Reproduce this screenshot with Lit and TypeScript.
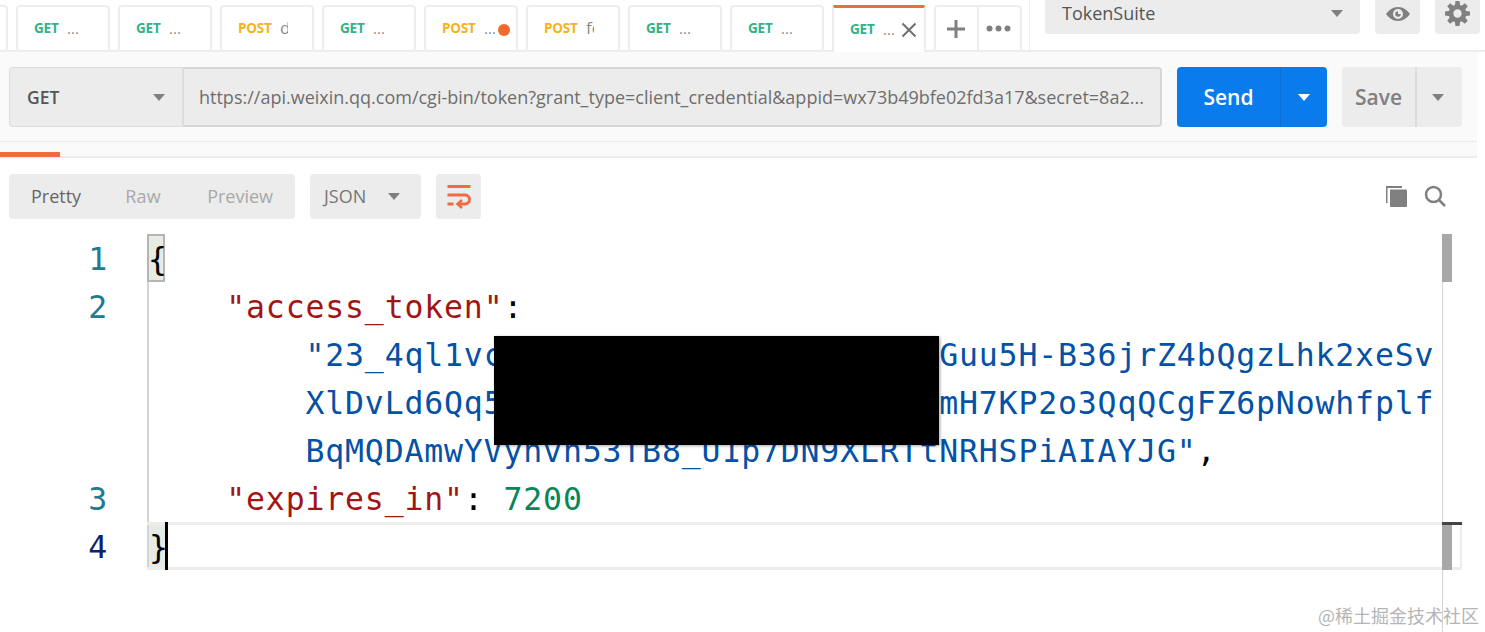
import { LitElement, html, css, svg } from "lit";
import { customElement } from "lit/decorators.js";

const caret = (cls = "") => html`<span class="caret ${cls}"></span>`;

const tabs = [
  { m: "GET", n: "..." },
  { m: "GET", n: "..." },
  { m: "POST", n: "d", clip: true },
  { m: "GET", n: "..." },
  { m: "POST", n: "...", dot: true },
  { m: "POST", n: "fo", clip: true },
  { m: "GET", n: "..." },
  { m: "GET", n: "..." },
  { m: "GET", n: "...", active: true },
];

@customElement("app-root")
export class AppRoot extends LitElement {
  static styles = css`
    :host { display: block; width: 1485px; height: 632px; overflow: hidden; position: relative; background: #fff; font-family: "Open Sans", "Noto Sans", sans-serif; color: #808080; }
    * { box-sizing: border-box; }
    .top { height: 52px; display: flex; align-items: flex-start; border-bottom: 2px solid #ededed; }
    .tabs { display: flex; gap: 8px; height: 50px; padding-top: 5px; }
    .frag { width: 8px; border: 2px solid #ededed; border-left: 0; border-bottom: 0; border-radius: 0 4px 0 0; }
    .tab { width: 94px; border: 2px solid #ededed; border-bottom: 0; border-radius: 4px 4px 0 0; display: flex; align-items: center; padding: 0 0 2px 16px; position: relative; font-size: 14px; }
    .tab.active { border-top: 3px solid #ef6c43; background: #fff; height: 47px; margin-bottom: -2px; border-radius: 3px 3px 0 0; }
    .m { font-weight: 700; font-size: 13.5px; letter-spacing: -0.2px; width: 33px; flex: none; }
    .m.GET { color: #2fb388; }
    .m.POST { color: #f5b21b; width: 42px; }
    .name { color: #8a8a8a; font-size: 15px; line-height: 20px; }
    .name.clip { width: 8px; overflow: hidden; white-space: nowrap; font-size: 17px; line-height: 22px; }
    .dot { position: absolute; right: 6px; top: 17px; width: 12px; height: 12px; border-radius: 50%; background: #f26b2a; }
    .close { position: absolute; right: 7px; top: 14px; }
    .adder { display: flex; width: 88px; height: 45px; border: 2px solid #ededed; border-bottom: 0; border-radius: 4px 4px 0 0; }
    .adder > div { flex: 1; display: flex; align-items: center; justify-content: center; padding-right: 2px; }
    .adder > div:first-child { border-right: 2px solid #ededed; }
    .sep { width: 1px; height: 50px; background: #efefef; margin: 0 15px 0 7px; }
    .suite { width: 315px; height: 34px; background: #ececec; border-radius: 0 0 4px 4px; display: flex; align-items: center; justify-content: space-between; padding: 0 17px 8px 17px; font-size: 18px; color: #555; }
    .iconbtn { width: 45px; height: 34px; background: #ececec; border-radius: 0 0 4px 4px; margin-left: 15px; display: flex; align-items: center; justify-content: center; padding-bottom: 7px; }
    .caret { display: inline-block; width: 0; height: 0; border-left: 6px solid transparent; border-right: 6px solid transparent; border-top: 7px solid #808080; }
    .caret.white { border-top-color: #fff; }

    .request { width: 1477px; height: 90px; background: #fafafa; padding: 15px 15px 0 9px; display: flex; border-bottom: 1px solid #ececec; }
    .bar { display: flex; height: 60px; flex: none; }
    .method { width: 175px; background: #ececec; border: 1px solid #dcdcdc; border-right: 2px solid #dcdcdc; border-radius: 4px 0 0 4px; display: flex; align-items: center; justify-content: space-between; padding: 0 17px; font-size: 17.5px; font-weight: 600; color: #555; }
    .url { width: 978px; background: #ececec; border: 2px solid #d6d6d6; border-left: 0; border-radius: 0 4px 4px 0; display: flex; align-items: center; padding: 0 0 0 15px; font-size: 18px; color: #6e6e6e; white-space: nowrap; }
    .send { margin-left: 15px; width: 150px; height: 60px; background: #097bed; border-radius: 4px; display: flex; color: #fff; font-size: 21px; font-weight: 600; }
    .send > div:first-child { width: 104px; display: flex; align-items: center; justify-content: center; border-right: 1px solid #0b6fd4; }
    .send > div:last-child { flex: 1; display: flex; align-items: center; justify-content: center; }
    .save { margin-left: 15px; width: 120px; height: 60px; background: #ececec; border-radius: 4px; display: flex; color: #808080; font-size: 21px; font-weight: 600; }
    .save > div:first-child { width: 75px; display: flex; align-items: center; justify-content: center; border-right: 2px solid #dcdcdc; }
    .save > div:last-child { flex: 1; display: flex; align-items: center; justify-content: center; padding-right: 3px; }

    .subtabs { width: 1477px; height: 16px; padding-top: 10px; background: #fafafa; border-bottom: 2px solid #ececec; }
    .subtabs div { width: 60px; height: 5px; background: #ef6c43; }

    .rtools { height: 76px; padding: 16px 0 0 9px; display: flex; align-items: flex-start; }
    .seg { height: 45px; background: #ececec; border-radius: 4px; display: flex; align-items: center; font-size: 18px; }
    .views { width: 286px; padding: 0 0 2px 22px; }
    .views span { color: #a8a8a8; }
    .views .on { color: #666; margin-right: 44px; }
    .views .raw { margin-right: 46px; letter-spacing: 0.3px; }
    .fmt { width: 111px; margin-left: 15px; padding: 0 21px 2px 14px; justify-content: space-between; color: #777; }
    .fmt .caret { margin-top: 2px; }
    .wrap { width: 45px; margin-left: 15px; justify-content: center; }
    .right { margin-left: auto; display: flex; align-items: center; gap: 17px; height: 45px; padding: 0 39px 1px 0; }

    .editor { position: relative; height: 398px; font-family: "DejaVu Sans Mono", "Liberation Mono", monospace; font-size: 31.5px; letter-spacing: 0.84px; }
    .row { display: flex; height: 48px; line-height: 50px; }
    .num { width: 147px; flex: none; text-align: right; padding-right: 39px; color: #237893; }
    .num.cur { color: #0b216f; }
    .code { flex: none; width: 1295px; border-left: 2px solid #d4d4d4; white-space: pre; color: #000; text-indent: -2px; }
    .k { color: #a31515; }
    .s { color: #0451a5; }
    .n { color: #098658; }
    .match { display: inline-block; width: 18px; height: 48px; background: #e6ece4; border: 2px solid #b5b5b5; line-height: 46px; text-indent: -1px; vertical-align: top; }
    .match.end { border: 0; border-left: 2px solid #d4d4d4; line-height: 50px; text-indent: 0; }
    .curline { position: absolute; left: 147px; top: 288px; width: 1315px; height: 48px; border-top: 3px solid #ededed; border-bottom: 3px solid #ededed; border-right: 2px solid #ededed; }
    .cursor { position: absolute; left: 165px; top: 288px; width: 3px; height: 48px; background: #000; }
    .rule { position: absolute; left: 1442px; top: 0; bottom: 0; width: 1px; background: #d4d4d4; }
    .thumb { position: absolute; left: 1442px; width: 10px; background: #a8a8a8; }
    .thumb.a { top: 0; height: 48px; }
    .thumb.b { top: 288px; height: 48px; }
    .mark { position: absolute; left: 1442px; top: 288px; width: 20px; height: 3px; background: #444; }
    .redact { position: absolute; left: 494px; top: 336px; width: 445px; height: 109px; background: #000; box-shadow: 1px 1px 3px rgba(0,0,0,.35); }
    .wm { position: absolute; right: 6px; top: 603px; font-size: 18px; line-height: 24px; color: #b5b5b5; font-family: "Noto Sans CJK SC", "Open Sans", sans-serif; white-space: nowrap; }
    svg { display: block; }
  `;

  private tab(t: any) {
    return html`<div class="tab ${t.active ? "active" : ""}">
      <span class="m ${t.m}">${t.m}</span>
      <span class="name ${t.clip ? "clip" : ""}">${t.n}</span>
      ${t.dot ? html`<span class="dot"></span>` : ""}
      ${t.active ? html`<svg class="close" width="16" height="16" viewBox="0 0 16 16"><path d="M1.5 1.5 14.5 14.5M14.5 1.5 1.5 14.5" stroke="#707070" stroke-width="2" fill="none"/></svg>` : ""}
    </div>`;
  }

  render() {
    const teeth = [0, 45, 90, 135, 180, 225, 270, 315].map(
      (a) => svg`<path d="M10 0h4l.6 5h-5.200z" transform="rotate(${a} 12 12)"/>`
    );
    return html`
      <div class="top">
        <div class="tabs">
          <div class="frag"></div>
          ${tabs.map((t) => this.tab(t))}
          <div class="adder">
            <div><svg width="18" height="18" viewBox="0 0 18 18"><path d="M9 0v18M0 9h18" stroke="#808080" stroke-width="3"/></svg></div>
            <div><svg width="25" height="7" viewBox="0 0 25 7" fill="#808080"><circle cx="3.500" cy="3.500" r="3"/><circle cx="12.500" cy="3.500" r="3"/><circle cx="21.500" cy="3.500" r="3"/></svg></div>
          </div>
        </div>
        <div class="sep"></div>
        <div class="suite"><span>TokenSuite</span>${caret()}</div>
        <div class="iconbtn"><svg width="24" height="14" viewBox="0 0 24 14"><path fill-rule="evenodd" fill="#808080" d="M12 0C6.500 0 2.500 3.500 0 7c2.500 3.500 6.500 7 12 7s9.500-3.500 12-7c-2.500-3.500-6.500-7-12-7zm0 2a5 5 0 1 1 0 10 5 5 0 0 1 0-10z"/><path fill="#808080" d="M12 4.200a2.800 2.800 0 1 0 2.800 2.800H12z"/></svg></div>
        <div class="iconbtn"><svg width="25" height="25" viewBox="0 0 24 24" fill="#808080">${teeth}<circle cx="12" cy="12" r="6.300" fill="none" stroke="#808080" stroke-width="4.600"/></svg></div>
      </div>

      <div class="request">
        <div class="bar">
          <div class="method"><span>GET</span>${caret()}</div>
          <div class="url">https://api.weixin.qq.com/cgi-bin/token?grant_type=client_credential&amp;appid=wx73b49bfe02fd3a17&amp;secret=8a2...</div>
        </div>
        <div class="send"><div>Send</div><div>${caret("white")}</div></div>
        <div class="save"><div>Save</div><div>${caret()}</div></div>
      </div>
      <div class="subtabs"><div></div></div>

      <div class="rtools">
        <div class="seg views"><span class="on">Pretty</span><span class="raw">Raw</span><span>Preview</span></div>
        <div class="seg fmt"><span>JSON</span>${caret()}</div>
        <div class="seg wrap"><svg width="26" height="24" viewBox="0 0 26 24" fill="none" stroke="#ef6c43" stroke-width="3"><path d="M1.500 1.500h23M1.500 10h17.500a4.500 4.500 0 0 1 0 9H12"/><path d="M1.500 19h6"/><path d="M16 15 11.500 19 16 23" stroke-width="2.500"/></svg></div>
        <div class="right">
          <svg width="22" height="22" viewBox="0 0 22 22" fill="#808080"><path d="M5 4.500h16a1 1 0 0 1 1 1V21a1 1 0 0 1-1 1H6a1 1 0 0 1-1-1z"/><path d="M1 1h16v2H2.500v15H1z"/></svg>
          <svg width="22" height="22" viewBox="0 0 22 22" fill="none" stroke="#808080" stroke-width="2.500"><circle cx="9.500" cy="9.500" r="7.500"/><path d="m15 15 6 6"/></svg>
        </div>
      </div>

      <div class="editor">
        <div class="row"><div class="num">1</div><div class="code"><span class="match">{</span></div></div>
        <div class="row"><div class="num">2</div><div class="code">    <span class="k">"access_token"</span>:</div></div>
        <div class="row"><div class="num"></div><div class="code"><span class="s">        "23_4ql1vc                      Guu5H-B36jrZ4bQgzLhk2xeSv</span></div></div>
        <div class="row"><div class="num"></div><div class="code"><span class="s">        XlDvLd6Qq5                      mH7KP2o3QqQCgFZ6pNowhfplf</span></div></div>
        <div class="row"><div class="num"></div><div class="code"><span class="s">        BqMQDAmwYVyhvh53TB8_U1p7DN9XLRTtNRHSPiAIAYJG"</span>,</div></div>
        <div class="row"><div class="num">3</div><div class="code">    <span class="k">"expires_in"</span>: <span class="n">7200</span></div></div>
        <div class="row"><div class="num cur">4</div><div class="code"><span class="match end">}</span></div></div>
        <div class="curline"></div>
        <div class="cursor"></div>
        <div class="rule"></div>
        <div class="thumb a"></div>
        <div class="thumb b"></div>
        <div class="mark"></div>
      </div>
      <div class="redact"></div>
      <div class="wm">@稀土掘金技术社区</div>
    `;
  }
}
